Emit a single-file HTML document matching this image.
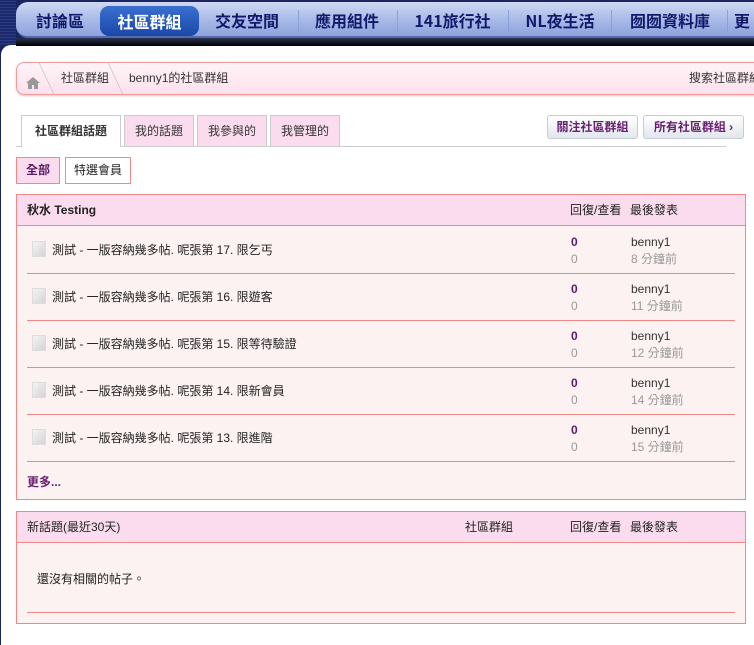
<!DOCTYPE html>
<html><head><meta charset="utf-8"><style>
*{margin:0;padding:0;box-sizing:border-box}
body{width:754px;height:637px;overflow:hidden;background:#1a2560;font-family:"Liberation Sans","Noto Sans CJK TC",sans-serif;font-size:12px;color:#222;position:relative;white-space:nowrap}
.strip{position:absolute;left:0;top:0;width:16px;height:46px;background:repeating-linear-gradient(0deg,#1c2a6b 0 2px,#2b3a84 2px 3px)}
.nav{position:absolute;left:16px;top:2px;width:760px;height:36px;background:linear-gradient(#cfd9f3,#a9bbe8 50%,#8ea3dc);border-radius:12px 0 0 12px;border-bottom:2px solid #5868b0}
.nav span{position:absolute;top:0;height:36px;line-height:36px;font-size:16px;font-weight:bold;color:#12186a;font-family:"Noto Sans CJK TC",sans-serif;text-align:center}
.nav i{position:absolute;top:8px;width:1px;height:22px;background:#8aa0d8}
.act{background:linear-gradient(#3a6fd0,#1a48a8);color:#fff!important;border-radius:9px;top:4px!important;height:30px!important;line-height:30px!important;text-align:center}
.band{position:absolute;left:16px;top:38px;width:740px;height:8px;background:linear-gradient(#2a3450,#000)}
.main{position:absolute;left:1px;top:45px;width:760px;height:600px;background:#fff;border-radius:10px 0 0 0}
.bc{position:absolute;left:16px;top:62px;width:745px;height:33px;background:linear-gradient(#fff4f8,#fde0ec);border:1px solid #f29a9a;border-radius:8px 0 0 8px;box-shadow:0 1px 2px #ccc;line-height:31px;font-size:12px;color:#333}
.tab{position:absolute;top:115px;height:31px;line-height:31px;text-align:center;background:#fbdcee;border:1px solid #ccc;border-bottom:none;color:#333}
.btn{position:absolute;top:115px;height:24px;line-height:22px;background:linear-gradient(#fff,#e2e6ee);border:1px solid #c6ccd6;border-radius:3px;font-weight:bold;color:#6a2070;text-align:center;font-size:12px}
.box{position:absolute;left:16px;width:730px;background:#fdf2f2;border:1px solid #f08888}
.hd{height:31px;line-height:31px;background:#fbdcee;border-bottom:1px solid #f08888;padding-left:10px;position:relative}
.row{position:absolute;left:10px;width:708px;height:47px;border-bottom:1px solid #f08888}
.row .t{position:absolute;left:5px;top:14px;line-height:18px}
.row .t b{display:inline-block;width:14px;height:16px;background:linear-gradient(135deg,#f4f4f4,#d4d4d4);border:1px solid #ddd;vertical-align:-3px;margin-right:6px}
.row .n{position:absolute;left:544px;top:7px;line-height:17px;color:#999}
.row .n b{color:#5a1a6a}
.row .l{position:absolute;left:604px;top:7px;line-height:17px;color:#999}
.row .l span{color:#333}
</style></head><body>
<div class="strip"></div>
<div class="main"></div>
<div class="nav">
<span style="left:16px;width:56px">討論區</span>
<span class="act" style="left:84px;width:99px">社區群組</span>
<span style="left:196px;width:70px">交友空間</span><i style="left:282px"></i>
<span style="left:297px;width:68px">應用組件</span><i style="left:381px"></i>
<span style="left:396px;width:81px">141旅行社</span><i style="left:492px"></i>
<span style="left:508px;width:72px">NL夜生活</span><i style="left:595px"></i>
<span style="left:611px;width:86px">囫囫資料庫</span><i style="left:711px"></i>
<span style="left:716px;width:20px">更</span>
</div>
<div class="band"></div>
<div class="bc">
<span style="position:absolute;left:8px;top:8px;width:16px;height:14px"><svg width="16" height="14" viewBox="0 0 16 14"><path d="M8 1L1 7h2v6h4V9h2v4h4V7h2z" fill="#999"/></svg></span>
<span style="position:absolute;left:29px;top:0;width:1px;height:31px;background:#ccc;transform:skewX(25deg)"></span>
<span style="position:absolute;left:44px">社區群組</span>
<span style="position:absolute;left:98px;top:0;width:1px;height:31px;background:#ccc;transform:skewX(25deg)"></span>
<span style="position:absolute;left:112px">benny1的社區群組</span>
<span style="position:absolute;left:672px">搜索社區群組</span>
</div>
<div style="position:absolute;left:16px;top:146px;width:710px;height:1px;background:#ccc"></div>
<div class="tab" style="left:21px;width:100px;background:#fff;height:32px;font-weight:bold">社區群組話題</div>
<div class="tab" style="left:124px;width:70px">我的話題</div>
<div class="tab" style="left:197px;width:70px">我參與的</div>
<div class="tab" style="left:270px;width:70px">我管理的</div>
<div class="btn" style="left:547px;width:91px">關注社區群組</div>
<div class="btn" style="left:643px;width:101px">所有社區群組 ›</div>
<div style="position:absolute;left:16px;top:157px;width:44px;height:27px;line-height:25px;text-align:center;background:#fbdcee;border:1px solid #f08888;font-weight:bold;color:#5a1a6a">全部</div>
<div style="position:absolute;left:65px;top:157px;width:66px;height:27px;line-height:25px;text-align:center;background:#fff;border:1px solid #f08888">特選會員</div>
<div class="box" style="top:194px;height:306px">
<div class="hd"><b>秋水 Testing</b><span style="position:absolute;left:553px">回復/查看</span><span style="position:absolute;left:613px">最後發表</span></div>
<div class="row" style="top:32px"><div class="t"><b></b>測試 - 一版容納幾多帖. 呢張第 17. 限乞丐</div><div class="n"><b>0</b><br>0</div><div class="l"><span>benny1</span><br>8 分鐘前</div></div>
<div class="row" style="top:79px"><div class="t"><b></b>測試 - 一版容納幾多帖. 呢張第 16. 限遊客</div><div class="n"><b>0</b><br>0</div><div class="l"><span>benny1</span><br>11 分鐘前</div></div>
<div class="row" style="top:126px"><div class="t"><b></b>測試 - 一版容納幾多帖. 呢張第 15. 限等待驗證</div><div class="n"><b>0</b><br>0</div><div class="l"><span>benny1</span><br>12 分鐘前</div></div>
<div class="row" style="top:173px"><div class="t"><b></b>測試 - 一版容納幾多帖. 呢張第 14. 限新會員</div><div class="n"><b>0</b><br>0</div><div class="l"><span>benny1</span><br>14 分鐘前</div></div>
<div class="row" style="top:220px"><div class="t"><b></b>測試 - 一版容納幾多帖. 呢張第 13. 限進階</div><div class="n"><b>0</b><br>0</div><div class="l"><span>benny1</span><br>15 分鐘前</div></div>
<div style="position:absolute;left:10px;top:278px;font-weight:bold;color:#6a2070">更多...</div>
</div>
<div class="box" style="top:511px;height:113px">
<div class="hd">新話題(最近30天)<span style="position:absolute;left:448px">社區群組</span><span style="position:absolute;left:553px">回復/查看</span><span style="position:absolute;left:613px">最後發表</span></div>
<div style="position:absolute;left:20px;top:58px">還沒有相關的帖子。</div>
<div style="position:absolute;left:10px;top:100px;width:708px;height:1px;background:#f08888"></div>
</div>
</body></html>
